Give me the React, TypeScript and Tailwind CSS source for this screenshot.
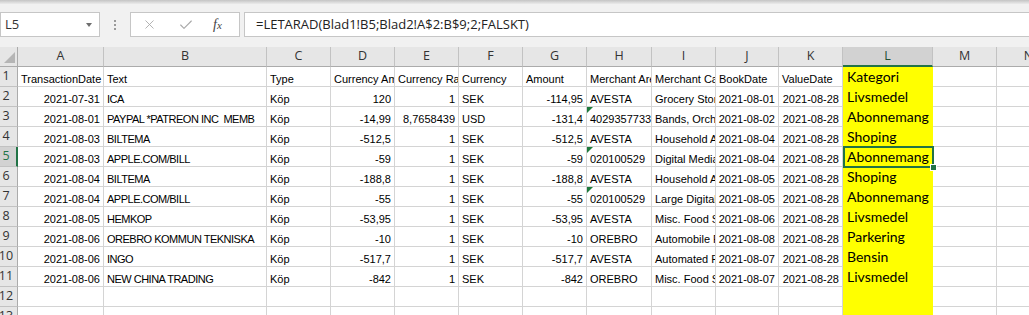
import { X, Check } from 'lucide-react';

const COLS = ['A', 'B', 'C', 'D', 'E', 'F', 'G', 'H', 'I', 'J', 'K', 'L', 'M', 'N'];

// r = right aligned (numbers/dates), l = left aligned (text)
const ALIGN = ['r', 'l', 'l', 'r', 'r', 'l', 'r', 'l', 'l', 'r', 'r', 'l', 'l', 'l'];

const header = [
  'TransactionDate', 'Text', 'Type', 'Currency Amount', 'Currency Rate', 'Currency', 'Amount',
  'Merchant Area', 'Merchant Category', 'BookDate', 'ValueDate', 'Kategori', '', '',
];

const rows = [
  ['2021-07-31', 'ICA', 'Köp', '120', '1', 'SEK', '-114,95', 'AVESTA', 'Grocery Stores, Supermarkets', '2021-08-01', '2021-08-28', 'Livsmedel'],
  ['2021-08-01', 'PAYPAL *PATREON INC  MEMB', 'Köp', '-14,99', '8,7658439', 'USD', '-131,4', '4029357733', 'Bands, Orchestras', '2021-08-02', '2021-08-28', 'Abonnemang'],
  ['2021-08-03', 'BILTEMA', 'Köp', '-512,5', '1', 'SEK', '-512,5', 'AVESTA', 'Household Appliance Stores', '2021-08-04', '2021-08-28', 'Shoping'],
  ['2021-08-03', 'APPLE.COM/BILL', 'Köp', '-59', '1', 'SEK', '-59', '020100529', 'Digital Media, Books', '2021-08-04', '2021-08-28', 'Abonnemang'],
  ['2021-08-04', 'BILTEMA', 'Köp', '-188,8', '1', 'SEK', '-188,8', 'AVESTA', 'Household Appliance Stores', '2021-08-05', '2021-08-28', 'Shoping'],
  ['2021-08-04', 'APPLE.COM/BILL', 'Köp', '-55', '1', 'SEK', '-55', '020100529', 'Large Digital Goods', '2021-08-05', '2021-08-28', 'Abonnemang'],
  ['2021-08-05', 'HEMKOP', 'Köp', '-53,95', '1', 'SEK', '-53,95', 'AVESTA', 'Misc. Food Stores', '2021-08-06', '2021-08-28', 'Livsmedel'],
  ['2021-08-06', 'OREBRO KOMMUN TEKNISKA', 'Köp', '-10', '1', 'SEK', '-10', 'OREBRO', 'Automobile Parking Lots', '2021-08-08', '2021-08-28', 'Parkering'],
  ['2021-08-06', 'INGO', 'Köp', '-517,7', '1', 'SEK', '-517,7', 'AVESTA', 'Automated Fuel Dispensers', '2021-08-07', '2021-08-28', 'Bensin'],
  ['2021-08-06', 'NEW CHINA TRADING', 'Köp', '-842', '1', 'SEK', '-842', 'OREBRO', 'Misc. Food Stores', '2021-08-07', '2021-08-28', 'Livsmedel'],
];

const UI_FONT = "font-['Open_Sans','Noto_Sans',sans-serif]";

const Cell = ({ value, col, row }: { value: string; col: number; row: number }) => {
  const isKategori = col === 11;
  const right = row > 1 && ALIGN[col] === 'r';
  const selected = isKategori && row === 5;
  const flagged = col === 7 && /^\d+$/.test(value);

  if (isKategori) {
    return (
      <div className="relative h-[20px] bg-[#ffff00] px-[4px] pt-[4px] whitespace-nowrap font-['Lato',sans-serif] text-[14px] leading-[12px] text-black">
        {value}
        {selected && (
          <div className="absolute left-0 top-[-1px] z-10 h-[22px] w-[91px] border-2 border-[#217346]">
            <div className="absolute right-[-5px] bottom-[-5px] h-[7px] w-[7px] border border-white bg-[#217346]" />
          </div>
        )}
      </div>
    );
  }

  return (
    <div
      className={`relative flex h-[20px] overflow-hidden whitespace-pre border-r border-b border-[#d4d4d4] px-[3px] pt-[6px] font-['Liberation_Sans',Arial,sans-serif] text-[11px] leading-[12px] text-black ${
        right ? 'justify-end' : 'justify-start'
      } ${col === 1 && row > 1 ? 'tracking-[-0.5px]' : ''}`}
    >
      {flagged && (
        <span className="absolute left-0 top-0 h-0 w-0 border-t-[6px] border-r-[6px] border-t-[#1e7b3c] border-r-transparent" />
      )}
      {value}
    </div>
  );
};

const App = () => {
  const allRows = [header, ...rows, [], []];

  return (
    <div className="h-[315px] w-[1029px] overflow-hidden bg-white">
      {/* Top edge of the ribbon */}
      <div className="h-[4px] bg-gradient-to-b from-[#c4c4c4] to-[#ebebeb]" />

      {/* Formula bar */}
      <div className={`flex h-[43px] items-start bg-[#f1f1f1] pt-[8px] ${UI_FONT}`}>
        <div className="flex h-[25px] w-[100px] items-center justify-between border border-[#c6c6c6] bg-white pl-[4px] pr-[7px] text-[13px] text-[#333]">
          <span>L5</span>
          <span className="h-0 w-0 border-x-[3.5px] border-t-[4px] border-x-transparent border-t-[#6e6e6e]" />
        </div>
        <div className="flex h-[25px] w-[30px] flex-col items-center justify-center gap-[2px]">
          <span className="h-[2px] w-[2px] bg-[#9a9a9a]" />
          <span className="h-[2px] w-[2px] bg-[#9a9a9a]" />
          <span className="h-[2px] w-[2px] bg-[#9a9a9a]" />
        </div>
        <div className="flex h-[25px] w-[110px] items-center border border-[#c6c6c6] bg-white">
          <X size={15} strokeWidth={1.4} className="ml-[11px] text-[#a8a8a8]" />
          <Check size={16} strokeWidth={1.6} className="ml-[21px] text-[#a8a8a8]" />
          <span className="ml-[19px] font-['Liberation_Serif',serif] text-[14px] italic text-[#444]">
            f<span className="text-[11px]">x</span>
          </span>
        </div>
        <div className="ml-[4px] flex h-[25px] flex-1 items-center border border-r-0 border-[#c6c6c6] bg-white pl-[11px] text-[13px] text-[#222]">
          =LETARAD(Blad1!B5;Blad2!A$2:B$9;2;FALSKT)
        </div>
      </div>

      {/* Sheet grid */}
      <div className="grid grid-cols-[18px_86px_163px_64px_64px_64px_64px_64px_65px_64px_63px_64px_90px_64px_64px]">
        {/* Column headers */}
        <div className="relative h-[20px] border-r border-b border-[#ababab] bg-[#e6e6e6]">
          <span className="absolute bottom-[3px] right-[2px] h-0 w-0 border-b-[11px] border-l-[11px] border-b-[#b5b5b5] border-l-transparent" />
        </div>
        {COLS.map((c) => (
          <div
            key={c}
            className={`flex h-[20px] items-center justify-center border-r border-[#c2c2c2] text-[12.5px] ${UI_FONT} ${
              c === 'L'
                ? 'border-b-2 border-b-[#217346] bg-[#d2d2d2] text-[#1f4f33]'
                : 'border-b border-b-[#ababab] bg-[#e6e6e6] text-[#333]'
            }`}
          >
            {c}
          </div>
        ))}

        {allRows.map((r, ri) => {
          const rowNum = ri + 1;
          const active = rowNum === 5;
          return [
            <div
              key={`h${rowNum}`}
              className={`flex h-[20px] items-center overflow-hidden border-b text-[12.5px] ${UI_FONT} ${
                active
                  ? 'border-r-2 border-r-[#217346] border-b-[#c2c2c2] bg-[#d2d2d2] text-[#217346]'
                  : 'border-r border-r-[#ababab] border-b-[#c2c2c2] bg-[#e6e6e6] text-[#333]'
              }`}
            >
              <span className="-ml-[6px] w-[24px] shrink-0 text-center">{rowNum}</span>
            </div>,
            ...COLS.map((_, ci) => (
              <Cell key={`${rowNum}-${ci}`} value={r[ci] ?? ''} col={ci} row={rowNum} />
            )),
          ];
        })}
      </div>
    </div>
  );
};

export default App;
